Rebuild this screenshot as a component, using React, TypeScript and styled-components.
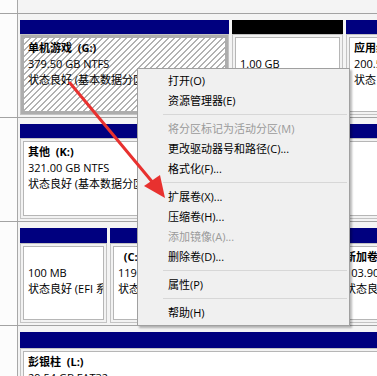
import styled, { createGlobalStyle } from "styled-components";

const GlobalStyle = createGlobalStyle`
    html, body {
        margin: 0;
        padding: 0;
    }

    body {
        background: #f4f4f4;
        font-family: "Open Sans", "Noto Sans CJK SC", sans-serif;
        color: #000;
    }
`;

const Screen = styled.div`
    position: relative;
    width: 377px;
    height: 376px;
    overflow: hidden;
    background: #f4f4f4;
`;

const DiskRow = styled.div<{ $height: number; $top?: boolean }>`
    display: flex;
    height: ${(p) => p.$height}px;
    box-sizing: border-box;
    border-top: ${(p) => (p.$top ? "none" : "1px solid #a3a3a3")};
`;

const DiskLabel = styled.div`
    flex: 0 0 17px;
    background: #fcfcfc;
    border-right: 1px solid #a8a8a8;
`;

const Partitions = styled.div`
    flex: 1;
    display: flex;
    gap: 3px;
    padding: 6px 0 2px 2px;
    overflow: hidden;
`;

const Partition = styled.div<{ $w: number }>`
    flex: 0 0 ${(p) => p.$w}px;
    display: flex;
    flex-direction: column;
    min-width: 0;
`;

const Bar = styled.div<{ $color: string; $h: number }>`
    flex: 0 0 ${(p) => p.$h}px;
    background: ${(p) => p.$color};
`;

const Box = styled.div<{ $selected?: boolean }>`
    flex: 1;
    display: flex;
    border: 1px solid #c3c3c3;
    padding: 2px;
    background: ${(p) => (p.$selected ? "#adadad" : "#f2f2f2")};
    min-height: 0;
`;

const Inner = styled.div<{ $selected?: boolean }>`
    flex: 1;
    min-width: 0;
    border: 1px solid ${(p) => (p.$selected ? "#adadad" : "#b6b6b6")};
    background: ${(p) =>
        p.$selected
            ? "repeating-linear-gradient(135deg, #b2b2b2 0 1px, #fff 1px 4.24px)"
            : "#fff"};
    padding: 2px 4px 0;
    overflow: hidden;
`;

const Line = styled.div<{ $bold?: boolean }>`
    font-size: 11px;
    line-height: 16px;
    height: 16px;
    white-space: pre;
    font-weight: ${(p) => (p.$bold ? 700 : 400)};
`;

const Menu = styled.div`
    position: absolute;
    left: 137px;
    top: 68px;
    width: 213px;
    box-sizing: border-box;
    background: #f0f0f0;
    border: 1px solid #a0a0a0;
    padding: 2px;
    box-shadow: 2px 2px 2px rgba(0, 0, 0, 0.28);
`;

const Item = styled.div<{ $disabled?: boolean }>`
    height: 20px;
    line-height: 20px;
    padding-left: 28px;
    font-size: 11px;
    white-space: nowrap;
    color: ${(p) => (p.$disabled ? "#9a9a9a" : "#000")};
`;

const Separator = styled.div`
    height: 1px;
    margin: 3px 0 4px 23px;
    background: #d7d7d7;
`;

const Arrow = styled.svg`
    position: absolute;
    left: 0;
    top: 0;
    pointer-events: none;
`;

type Part = {
    w: number;
    bar: string;
    lines: string[];
    selected?: boolean;
};

type Row = { bar: number; parts: Part[] };

const NAVY = "#00007f";

const rows: Row[] = [
    {
        bar: 14,
        parts: [
            { w: 209, bar: NAVY, selected: true, lines: ["单机游戏  (G:)", "379.50 GB NTFS", "状态良好 (基本数据分区)"] },
            { w: 111, bar: "#000", lines: ["", "1.00 GB", "未分配"] },
            { w: 200, bar: NAVY, lines: ["应用组件", "200.51 GB NTFS", "状态良好 (基本数据分区)"] },
        ],
    },
    {
        bar: 14,
        parts: [{ w: 400, bar: NAVY, lines: ["其他  (K:)", "321.00 GB NTFS", "状态良好 (基本数据分区)"] }],
    },
    {
        bar: 15,
        parts: [
            { w: 87, bar: NAVY, lines: ["", "100 MB", "状态良好 (EFI 系统分区)"] },
            { w: 224, bar: NAVY, lines: ["  (C:)", "119.18 GB NTFS", "状态良好 (启动, 页面文件, 故障转储, 基本数据分区)"] },
            { w: 200, bar: NAVY, lines: ["新加卷  (D:)", "103.90 GB NTFS", "状态良好 (基本数据分区)"] },
        ],
    },
    {
        bar: 16,
        parts: [{ w: 400, bar: NAVY, lines: ["彭银柱  (L:)", "29.54 GB FAT32", "状态良好 (基本数据分区)"] }],
    },
];

type MenuEntry = { label: string; disabled?: boolean } | "sep";

const menu: MenuEntry[] = [
    { label: "打开(O)" },
    { label: "资源管理器(E)" },
    "sep",
    { label: "将分区标记为活动分区(M)", disabled: true },
    { label: "更改驱动器号和路径(C)..." },
    { label: "格式化(F)..." },
    "sep",
    { label: "扩展卷(X)..." },
    { label: "压缩卷(H)..." },
    { label: "添加镜像(A)...", disabled: true },
    { label: "删除卷(D)..." },
    "sep",
    { label: "属性(P)" },
    "sep",
    { label: "帮助(H)" },
];

const App = () => (
    <Screen>
        <GlobalStyle />
        <DiskRow $height={13} $top>
            <DiskLabel />
        </DiskRow>
        {rows.map((row, i) => (
            <DiskRow key={i} $height={104}>
                <DiskLabel />
                <Partitions>
                    {row.parts.map((p, j) => (
                        <Partition key={j} $w={p.w}>
                            <Bar $color={p.bar} $h={row.bar} />
                            <Box $selected={p.selected}>
                                <Inner $selected={p.selected}>
                                    {p.lines.map((l, k) => (
                                        <Line key={k} $bold={k === 0}>
                                            {l}
                                        </Line>
                                    ))}
                                </Inner>
                            </Box>
                        </Partition>
                    ))}
                </Partitions>
            </DiskRow>
        ))}
        <Menu>
            {menu.map((m, i) =>
                m === "sep" ? (
                    <Separator key={i} />
                ) : (
                    <Item key={i} $disabled={m.disabled}>
                        {m.label}
                    </Item>
                )
            )}
        </Menu>
        <Arrow width="377" height="376" viewBox="0 0 377 376">
            <line x1="70" y1="83" x2="154" y2="184" stroke="#e8312f" strokeWidth="3" strokeLinecap="round" />
            <polygon points="165,198 144,186 160,175" fill="#e8312f" />
        </Arrow>
    </Screen>
);

export default App;
